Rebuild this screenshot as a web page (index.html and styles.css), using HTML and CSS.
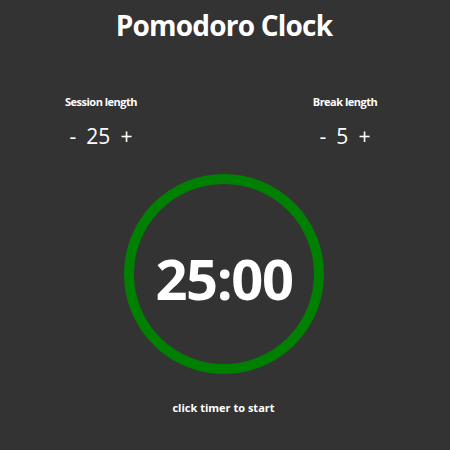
FILE: index.html
```html
<!DOCTYPE html>
<html>
<head>
<meta charset="utf-8">
<link rel="stylesheet" href="styles.css">
</head>
<body>
<div class="app">
  <h1 class="title">Pomodoro Clock</h1>
  <div class="settings">
    <div class="setting">
      <div class="label">Session length</div>
      <div class="control"><span class="btn">-</span><span class="value">25</span><span class="btn">+</span></div>
    </div>
    <div class="setting">
      <div class="label">Break length</div>
      <div class="control"><span class="btn">-</span><span class="value">5</span><span class="btn">+</span></div>
    </div>
  </div>
  <div class="timer-wrap">
    <div class="timer">25:00</div>
  </div>
  <div class="hint">click timer to start</div>
</div>
</body>
</html>
```
FILE: styles.css
```css
html, body {
  margin: 0;
  padding: 0;
  background: #333333;
  color: #ffffff;
  font-family: "Open Sans", sans-serif;
}
.app {
  width: 450px;
  height: 450px;
  display: flex;
  flex-direction: column;
  align-items: center;
}
.title {
  margin: 5px 0 0 -2px;
  font-size: 28px;
  line-height: 40px;
  font-weight: 700;
  letter-spacing: -0.8px;
}
.settings {
  width: 450px;
  box-sizing: border-box;
  padding: 0 45px 0 41px;
  display: flex;
  justify-content: space-between;
  margin-top: 49px;
}
.setting {
  width: 120px;
  display: flex;
  flex-direction: column;
  align-items: center;
}
.label {
  font-size: 11px;
  font-weight: 700;
  line-height: 16px;
  letter-spacing: -0.5px;
}
.control {
  margin-top: 12px;
  font-size: 21px;
  line-height: 28px;
  display: flex;
  gap: 10px;
}
.timer-wrap {
  margin-top: 24px;
  margin-left: -2px;
}
.timer {
  width: 200px;
  height: 200px;
  box-sizing: border-box;
  border: 10px solid #008000;
  border-radius: 50%;
  display: flex;
  align-items: center;
  justify-content: center;
  padding-top: 8px;
  font-size: 56px;
  font-weight: 700;
  letter-spacing: -1.4px;
  cursor: pointer;
}
.hint {
  margin: 26px 0 0 -3px;
  font-size: 11px;
  font-weight: 700;
  line-height: 16px;
  letter-spacing: 0;
}
```
